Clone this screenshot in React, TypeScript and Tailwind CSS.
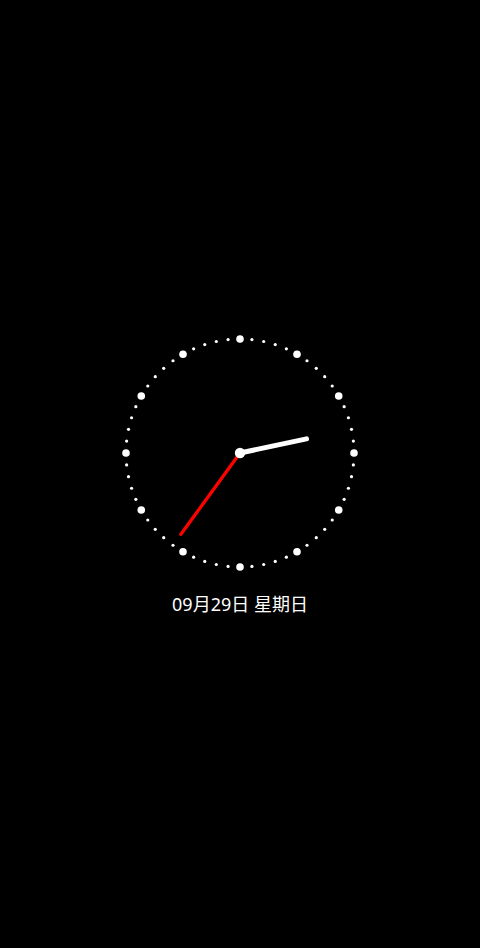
const R = 114;

function ClockFace() {
    const dots = Array.from({ length: 60 }, (_, i) => {
        const a = (i * 6 * Math.PI) / 180;
        const big = i % 5 === 0;
        return (
            <circle
                key={i}
                cx={R * Math.sin(a)}
                cy={-R * Math.cos(a)}
                r={big ? 3.8 : 1.6}
                fill="#fff"
            />
        );
    });

    // 2:36 — short white hour hand, long red minute hand
    const hourA = (78 * Math.PI) / 180;
    const minA = (216 * Math.PI) / 180;

    return (
        <svg width="240" height="240" viewBox="-120 -120 240 240">
            {dots}
            <line
                x1="0"
                y1="0"
                x2={100.5 * Math.sin(minA)}
                y2={-100.5 * Math.cos(minA)}
                stroke="#ff0000"
                strokeWidth="3.3"
                strokeLinecap="round"
            />
            <line
                x1="0"
                y1="0"
                x2={68 * Math.sin(hourA)}
                y2={-68 * Math.cos(hourA)}
                stroke="#fff"
                strokeWidth="5"
                strokeLinecap="round"
            />
            <circle cx="0" cy="0" r="5.2" fill="#fff" />
        </svg>
    );
}

export default function App() {
    return (
        <div className="w-full h-[948px] bg-black flex flex-col items-center pt-[333px]">
            <ClockFace />
            <div className="mt-[18px] text-[18px] leading-[26px] text-white font-['Noto_Sans','Noto_Sans_CJK_SC',sans-serif]">
                09月29日 星期日
            </div>
        </div>
    );
}
